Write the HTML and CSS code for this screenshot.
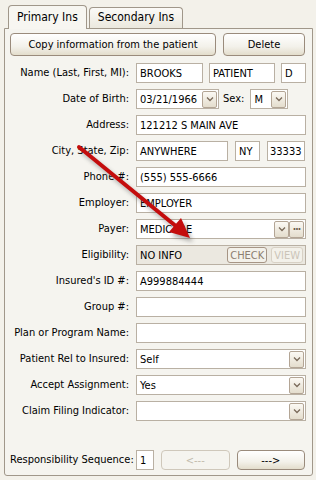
FILE: index.html
```html
<!DOCTYPE html>
<html lang="en">
<head>
    <meta charset="utf-8">
    <title>Insurance</title>
    <link rel="stylesheet" href="styles.css">
</head>
<body>
    <div class="window">
        <div class="tabs">
            <div class="tab active">Primary Ins</div>
            <div class="tab">Secondary Ins</div>
        </div>

        <div class="panel">
            <div class="actions">
                <button class="btn">Copy information from the patient</button>
                <button class="btn">Delete</button>
            </div>

            <div class="form">
                <label>Name (Last, First, MI):</label>
                <div class="field name-field">
                    <span class="box">BROOKS</span>
                    <span class="box">PATIENT</span>
                    <span class="box">D</span>
                </div>

                <label>Date of Birth:</label>
                <div class="field dob-field">
                    <span class="box combo dob">03/21/1966<span class="drop"><svg width="8" height="6" viewBox="0 0 8 6"><path d="M1 1.5 L4 4.5 L7 1.5" fill="none" stroke="#7a6a5a" stroke-width="1.3"/></svg></span></span>
                    <span class="inline-label">Sex:</span>
                    <span class="box combo sex">M<span class="drop"><svg width="8" height="6" viewBox="0 0 8 6"><path d="M1 1.5 L4 4.5 L7 1.5" fill="none" stroke="#7a6a5a" stroke-width="1.3"/></svg></span></span>
                </div>

                <label>Address:</label>
                <span class="box">121212 S MAIN AVE</span>

                <label>City, State, Zip:</label>
                <div class="field city-field">
                    <span class="box">ANYWHERE</span>
                    <span class="box">NY</span>
                    <span class="box">33333</span>
                </div>

                <label>Phone #:</label>
                <span class="box">(555) 555-6666</span>

                <label>Employer:</label>
                <span class="box">EMPLOYER</span>

                <label>Payer:</label>
                <span class="box combo">MEDICARE<span class="drop"><svg width="8" height="6" viewBox="0 0 8 6"><path d="M1 1.5 L4 4.5 L7 1.5" fill="none" stroke="#7a6a5a" stroke-width="1.3"/></svg></span><span class="drop dots">&middot;&middot;&middot;</span></span>

                <label>Eligibility:</label>
                <span class="box grey">NO INFO<span class="mini">CHECK</span><span class="mini off">VIEW</span></span>

                <label>Insured's ID #:</label>
                <span class="box">A999884444</span>

                <label>Group #:</label>
                <span class="box"></span>

                <label>Plan or Program Name:</label>
                <span class="box"></span>

                <label>Patient Rel to Insured:</label>
                <span class="box combo">Self<span class="drop"><svg width="8" height="6" viewBox="0 0 8 6"><path d="M1 1.5 L4 4.5 L7 1.5" fill="none" stroke="#7a6a5a" stroke-width="1.3"/></svg></span></span>

                <label>Accept Assignment:</label>
                <span class="box combo">Yes<span class="drop"><svg width="8" height="6" viewBox="0 0 8 6"><path d="M1 1.5 L4 4.5 L7 1.5" fill="none" stroke="#7a6a5a" stroke-width="1.3"/></svg></span></span>

                <label>Claim Filing Indicator:</label>
                <span class="box combo"><span class="drop"><svg width="8" height="6" viewBox="0 0 8 6"><path d="M1 1.5 L4 4.5 L7 1.5" fill="none" stroke="#7a6a5a" stroke-width="1.3"/></svg></span></span>
            </div>

            <div class="form sequence">
                <label>Responsibility Sequence:</label>
                <div class="field seq-field">
                    <span class="box">1</span>
                    <button class="btn off">&lt;---</button>
                    <button class="btn">---&gt;</button>
                </div>
            </div>
        </div>
    </div>

    <!-- annotation arrow drawn over the form -->
    <svg class="arrow" width="316" height="480" viewBox="0 0 316 480">
        <defs>
            <filter id="blur" x="-20%" y="-20%" width="140%" height="140%">
                <feGaussianBlur stdDeviation="2"/>
            </filter>
        </defs>
        <g opacity="0.45" filter="url(#blur)" transform="translate(3 4)">
            <line x1="79" y1="147" x2="177" y2="227" stroke="#555" stroke-width="4"/>
            <polygon points="190,238 169,232 181,218" fill="#555"/>
        </g>
        <line x1="79" y1="147" x2="177" y2="227" stroke="#c40d0d" stroke-width="4" stroke-linecap="round"/>
        <polygon points="190,238 169,232 181,218" fill="#c40d0d"/>
    </svg>
</body>
</html>
```

FILE: styles.css
```css
body {
    margin: 0;
    background-color: #f3f1ea;
    font-family: "DejaVu Sans Condensed", "DejaVu Sans", sans-serif;
    font-size: 11px;
    color: #000;
}
.window {
    width: 316px;
    height: 480px;
    padding: 5px 3px 4px 4px;
    box-sizing: border-box;
    display: flex;
    flex-direction: column;
}
.tabs {
    display: flex;
    align-items: flex-end;
    padding-left: 4px;
    gap: 2px;
    height: 23px;
    position: relative;
    z-index: 1;
}
.tab {
    border: 1px solid #a0978a;
    border-bottom: none;
    border-radius: 4px 4px 0 0;
    padding: 0 8px;
    height: 20px;
    line-height: 19px;
    font-size: 12px;
    background: linear-gradient(#fbfaf7, #ebe8de);
}
.tab.active {
    height: 23px;
    line-height: 22px;
    background: #f7f6f1;
    margin-bottom: -1px;
}
.panel {
    flex: 1;
    border: 1px solid #a0978a;
    border-radius: 0 0 3px 3px;
    background-color: #f5f4ef;
    padding: 4px 7px 4px 5px;
    display: flex;
    flex-direction: column;
}
.actions {
    display: grid;
    grid-template-columns: 206px 1fr;
    gap: 7px;
    margin-bottom: 7px;
}
.btn {
    font-family: inherit;
    font-size: 11px;
    color: #000;
    height: 23px;
    border: 1px solid #9a8b7c;
    border-radius: 4px;
    background: linear-gradient(#ffffff, #f3f1ea 60%, #e3ddcc);
    padding: 0;
}
.btn.off {
    color: #c2bbad;
    border-color: #cfc8bb;
    background: #f5f4ef;
}
.form {
    display: grid;
    grid-template-columns: 119px 1fr;
    column-gap: 7px;
    row-gap: 6px;
    grid-auto-rows: 20px;
}
.form label {
    text-align: right;
    line-height: 20px;
    white-space: nowrap;
}
.box {
    display: flex;
    align-items: center;
    border: 1px solid #b9b0a3;
    background-color: #fff;
    padding: 0 3px;
    height: 20px;
    box-sizing: border-box;
    white-space: nowrap;
    position: relative;
}
.field {
    display: flex;
    gap: 6px;
}
.name-field .box:nth-child(1) { width: 67px; }
.name-field .box:nth-child(2) { width: 66px; }
.name-field .box:nth-child(3) { width: 25px; }
.city-field { gap: 7px; }
.city-field .box:nth-child(1) { width: 92px; }
.city-field .box:nth-child(2) { width: 25px; }
.city-field .box:nth-child(3) { width: 38px; padding: 0 2px; }
.dob-field .dob { width: 83px; }
.dob-field .sex { width: 38px; }
.inline-label {
    line-height: 20px;
    margin-left: -2px;
}
.combo .drop:first-of-type {
    margin-left: auto;
}
.drop {
    width: 13px;
    height: 15px;
    border: 1px solid #b3a595;
    border-radius: 2px;
    background: linear-gradient(#fbf9f4, #e4ddcd);
    display: flex;
    align-items: center;
    justify-content: center;
    margin-right: -2px;
    flex: none;
}
.drop.dots {
    margin-left: 2px;
    color: #6d5d4d;
    font-size: 10px;
    font-weight: bold;
    letter-spacing: -1px;
}
.box.grey {
    background-color: #ebe8e0;
}
.mini {
    height: 16px;
    border: 1px solid #a69585;
    border-radius: 3px;
    padding: 0 2px;
    line-height: 15px;
    font-size: 11px;
    color: #8c7e70;
    box-sizing: border-box;
    background: #f3f1ea;
}
.mini:first-of-type {
    margin-left: auto;
}
.mini.off {
    margin-left: 4px;
    margin-right: -1px;
    color: #cbc4b8;
    border-color: #d8d1c5;
}
.sequence {
    margin-top: auto;
    margin-bottom: 1px;
}
.seq-field {
    gap: 7px;
}
.seq-field .box { width: 18px; }
.seq-field .btn {
    flex: 1;
    height: 20px;
}
.arrow {
    position: absolute;
    top: 0;
    left: 0;
    pointer-events: none;
}
```
